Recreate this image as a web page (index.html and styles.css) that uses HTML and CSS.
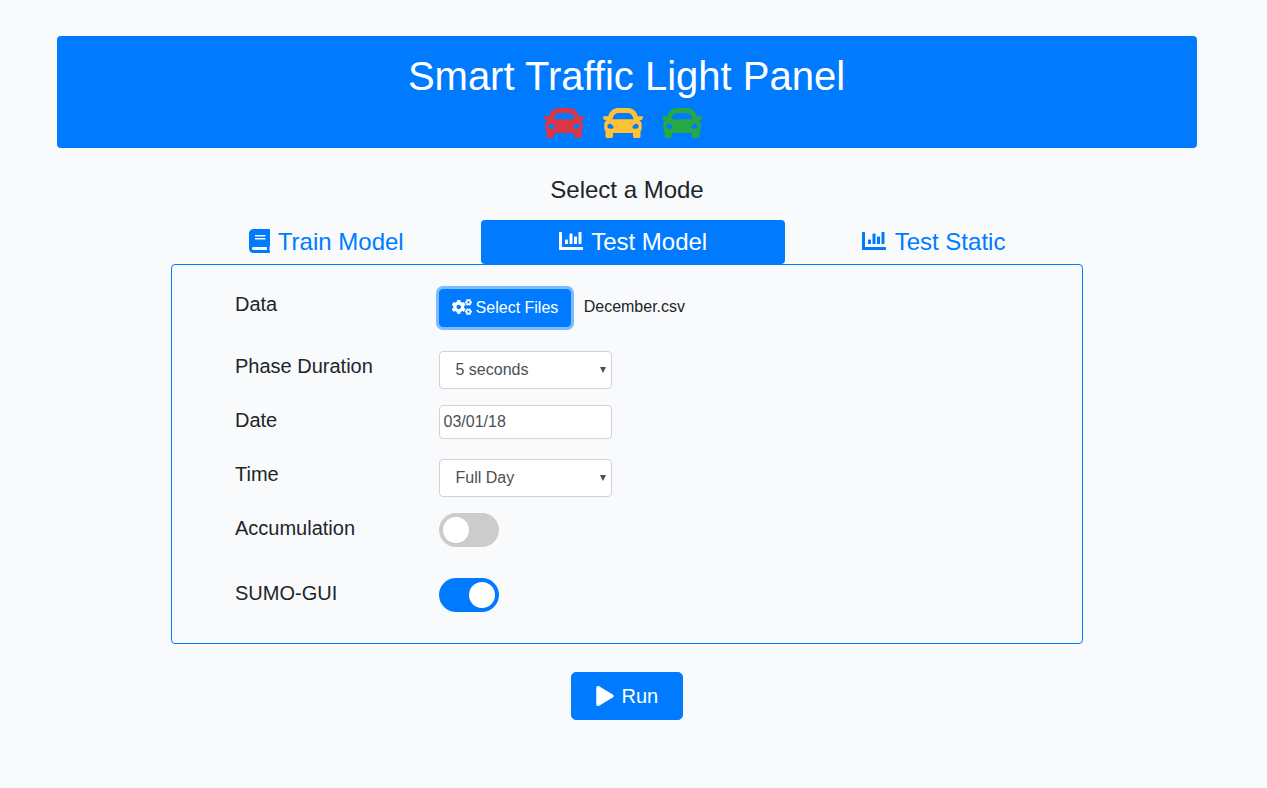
FILE: index.html
```
<!DOCTYPE html>
<html lang="en">
<head>
<meta charset="utf-8">
<title>Smart Traffic Light Panel</title>
<link rel="stylesheet" href="styles.css">
</head>
<body>
<svg class="defs" aria-hidden="true">
  <symbol id="car" viewBox="0 0 512 512"><path d="M499.991 168h-54.815l-7.854-20.944c-9.192-24.513-25.425-45.351-46.942-60.263S343.651 64 317.472 64H194.528c-26.18 0-51.391 7.882-72.908 22.793-21.518 14.912-37.75 35.75-46.942 60.263L66.824 168H12.009c-8.191 0-13.974 8.024-11.384 15.795l8 24A12 12 0 0 0 20.009 216h28.815l-.052.14C29.222 227.093 16 247.997 16 272v48c0 16.225 6.049 31.029 16 42.309V424c0 13.255 10.745 24 24 24h48c13.255 0 24-10.745 24-24v-40h256v40c0 13.255 10.745 24 24 24h48c13.255 0 24-10.745 24-24v-61.691c9.951-11.281 16-26.085 16-42.309v-48c0-24.003-13.222-44.907-32.772-55.86l-.052-.14h28.815a12 12 0 0 0 11.384-8.205l8-24c2.59-7.771-3.193-15.795-11.384-15.795zm-365.388 1.528C143.918 144.689 168 128 194.528 128h122.944c26.528 0 50.61 16.689 59.925 41.528L391.824 208H120.176l14.427-38.472zM88 328c-17.673 0-32-14.327-32-32s14.327-32 32-32 48 30.327 48 48-30.327 16-48 16zm336 0c-17.673 0-48 1.673-48-16s30.327-48 48-48 32 14.327 32 32-14.327 32-32 32z"/></symbol>
  <symbol id="book" viewBox="0 0 448 512"><path d="M448 360V24c0-13.3-10.7-24-24-24H96C43 0 0 43 0 96v320c0 53 43 96 96 96h328c13.3 0 24-10.7 24-24v-16c0-7.5-3.5-14.3-8.9-18.7-4.2-15.4-4.2-59.3 0-74.7 5.4-4.3 8.9-11.1 8.9-18.6zM128 134c0-3.3 2.7-6 6-6h212c3.3 0 6 2.7 6 6v20c0 3.3-2.7 6-6 6H134c-3.3 0-6-2.7-6-6v-20zm0 64c0-3.3 2.7-6 6-6h212c3.3 0 6 2.7 6 6v20c0 3.3-2.7 6-6 6H134c-3.3 0-6-2.7-6-6v-20zm253.4 250H96c-17.7 0-32-14.3-32-32 0-17.6 14.4-32 32-32h285.4c-1.9 17.1-1.9 46.9 0 64z"/></symbol>
  <symbol id="chart" viewBox="0 0 512 512"><path d="M500 384c6.600 0 12 5.400 12 12v40c0 6.600-5.400 12-12 12H12c-6.600 0-12-5.400-12-12V76c0-6.600 5.400-12 12-12h40c6.600 0 12 5.400 12 12v308h436z"/><rect x="128" y="224" width="64" height="96" rx="12"/><rect x="224" y="96" width="64" height="224" rx="12"/><rect x="320" y="160" width="64" height="160" rx="12"/><rect x="416" y="64" width="64" height="256" rx="12"/></symbol>
  <symbol id="play" viewBox="0 0 448 512"><path d="M424.4 214.7L72.4 6.6C43.800-10.300 0 6.100 0 47.900V464c0 37.500 40.700 60.100 72.400 41.300l352-208c31.400-18.500 31.500-64.100 0-82.600z"/></symbol>
  <symbol id="cogs" viewBox="0 0 640 512">
    <path id="small-cog" d="M512.1 191l-8.2 14.3c-3 5.3-9.4 7.5-15.1 5.4-11.8-4.4-22.6-10.7-32.1-18.6-4.6-3.8-5.8-10.5-2.8-15.7l8.2-14.3c-6.9-8-12.3-17.3-15.9-27.4h-16.5c-6 0-11.2-4.3-12.2-10.3-2-12-2.1-24.6 0-37.1 1-6 6.2-10.4 12.2-10.4h16.5c3.6-10.1 9-19.4 15.9-27.4l-8.2-14.3c-3-5.2-1.9-11.9 2.8-15.7 9.5-7.9 20.4-14.2 32.1-18.6 5.7-2.1 12.1.1 15.1 5.4l8.2 14.3c10.5-1.9 21.2-1.9 31.7 0L552 6.3c3-5.3 9.4-7.5 15.1-5.4 11.8 4.4 22.6 10.7 32.1 18.6 4.6 3.8 5.8 10.5 2.8 15.7l-8.2 14.3c6.9 8 12.3 17.3 15.9 27.4h16.5c6 0 11.2 4.3 12.2 10.3 2 12 2.1 24.6 0 37.1-1 6-6.2 10.4-12.2 10.4h-16.500c-3.6 10.1-9 19.4-15.900 27.4l8.2 14.3c3 5.2 1.9 11.9-2.8 15.7-9.5 7.900-20.4 14.2-32.1 18.600-5.7 2.1-12.1-.1-15.1-5.400l-8.2-14.3c-10.4 1.9-21.2 1.9-31.7 0zm-10.5-58.8c38.5 29.6 82.4-14.3 52.8-52.8-38.5-29.7-82.4 14.3-52.8 52.8z"/>
    <use href="#small-cog" y="301"/>
    <path d="M386.3 286.1l33.7 16.8c10.1 5.8 14.5 18.1 10.5 29.1-8.9 24.2-26.4 46.4-42.6 65.8-7.4 8.9-20.2 11.1-30.3 5.3l-29.1-16.8c-16 13.7-34.6 24.6-54.9 31.7v33.6c0 11.6-8.3 21.6-19.7 23.6-24.6 4.2-50.4 4.4-75.9 0-11.5-2-20-11.9-20-23.6V418c-20.3-7.2-38.9-18-54.9-31.7L74 403c-10 5.8-22.9 3.6-30.3-5.3-16.2-19.4-33.3-41.6-42.2-65.7-4-10.9.4-23.2 10.5-29.1l33.3-16.8c-3.9-20.9-3.9-42.4 0-63.4L12 205.8c-10.1-5.8-14.6-18.1-10.500-29 8.9-24.2 26-46.4 42.2-65.8 7.4-8.900 20.2-11.1 30.3-5.3l29.1 16.8c16-13.7 34.6-24.600 54.9-31.7V57.1c0-11.5 8.2-21.5 19.6-23.5 24.6-4.2 50.5-4.4 76-.1 11.5 2 20 11.9 20 23.6v33.6c20.3 7.2 38.9 18 54.9 31.7l29.1-16.8c10-5.8 22.9-3.6 30.3 5.3 16.2 19.4 33.2 41.6 42.1 65.8 4 10.9.1 23.2-10 29.1l-33.7 16.8c3.9 21 3.9 42.5 0 63.5zm-117.6 21.1c59.2-77-28.700-164.9-105.7-105.7-59.2 77 28.7 164.9 105.7 105.7z"/>
  </symbol>
</svg>
<main class="container">
  <header class="banner">
    <h1>Smart Traffic Light Panel</h1>
    <div class="cars">
      <svg class="red"><use href="#car"/></svg>
      <svg class="yellow"><use href="#car"/></svg>
      <svg class="green"><use href="#car"/></svg>
    </div>
  </header>
  <section class="mode">
    <h2>Select a Mode</h2>
    <nav class="tabs">
      <a class="tab"><svg class="book"><use href="#book"/></svg> Train Model</a>
      <a class="tab active"><svg class="chart"><use href="#chart"/></svg> Test Model</a>
      <a class="tab"><svg class="chart"><use href="#chart"/></svg> Test Static</a>
    </nav>
    <form class="panel">
      <div class="row data">
        <label>Data</label>
        <button type="button" class="btn files"><svg><use href="#cogs"/></svg> Select Files</button>
        <span class="filename">December.csv</span>
      </div>
      <div class="row"><label>Phase Duration</label><div class="field select"><span>5 seconds</span><i class="arrow"></i></div></div>
      <div class="row"><label>Date</label><div class="field date">03/01/18</div></div>
      <div class="row"><label>Time</label><div class="field select"><span>Full Day</span><i class="arrow"></i></div></div>
      <div class="row accumulation"><label>Accumulation</label><div class="switch"><i></i></div></div>
      <div class="row"><label>SUMO-GUI</label><div class="switch on"><i></i></div></div>
    </form>
  </section>
  <button type="button" class="btn run"><svg><use href="#play"/></svg> Run</button>
</main>
</body>
</html>
```
FILE: styles.css
```
* { box-sizing: border-box; }
body {
  margin: 0;
  background: #f8fafc;
  color: #212529;
  font: 16px/1.5 "Liberation Sans", Arial, sans-serif;
}
svg { fill: currentColor; }
.defs { display: none; }
.container {
  width: 1140px;
  margin-left: 57px;
  padding-top: 36px;
  display: flex;
  flex-direction: column;
  align-items: center;
}
.banner {
  width: 100%;
  height: 112px;
  padding-top: 16px;
  border-radius: 4px;
  background: #007bff;
  color: #fff;
  text-align: center;
}
h1 { margin: 0 1px 0 0; font-size: 40px; font-weight: 400; line-height: 48px; }
.cars { display: flex; justify-content: center; gap: 19px; padding: 3px 8px 0 0; }
.cars svg { width: 40px; height: 40px; }
.red { color: #dc3545; }
.yellow { color: #ffc135; }
.green { color: #28a745; }

.mode { width: 912px; padding-top: 27px; }
h2 { margin: 0 0 16px; font-size: 24px; font-weight: 400; line-height: 29px; text-align: center; }
.tabs { display: flex; }
.tab {
  flex: 1 1 auto;
  padding: 4px 16px;
  border-radius: 4px;
  color: #007bff;
  font-size: 24px;
  line-height: 36px;
  text-align: center;
}
.tab.active { background: #007bff; color: #fff; }
.tab svg { height: 24px; margin-right: 2px; vertical-align: -3px; }
.book { width: 21px; }
.chart { width: 24px; }

.panel { height: 380px; padding: 24px 63px; border: 1px solid #007bff; border-radius: 4px; }
.row { display: flex; align-items: flex-start; height: 54px; }
.row.data { height: 62px; }
.row.accumulation { height: 65px; }
label { width: 204px; font-size: 20px; line-height: 30px; }
.btn {
  border: 1px solid #007bff;
  background: #007bff;
  color: #fff;
  font-family: inherit;
  white-space: nowrap;
}
.files {
  width: 132px;
  height: 38px;
  padding: 0;
  border-radius: 4px;
  box-shadow: 0 0 0 3px rgba(0, 123, 255, .5);
  font-size: 16px;
}
.files svg { width: 20px; height: 16px; margin-right: -0.5px; vertical-align: -2px; }
.filename { margin-left: 12.7px; line-height: 36px; }
.field {
  display: flex;
  align-items: center;
  justify-content: space-between;
  width: 173px;
  height: 38px;
  border: 1px solid #ced4da;
  border-radius: 4px;
  background: #fff;
  color: #495057;
}
.select { padding: 0 5px 0 15.5px; }
.date { height: 34px; padding-left: 3.5px; }
.arrow { border: solid transparent; border-width: 6px 3px 0; border-top-color: #495057; }
.switch { width: 60px; height: 34px; padding: 4px; border-radius: 17px; background: #ccc; }
.switch i { display: block; width: 26px; height: 26px; border-radius: 50%; background: #fff; }
.switch.on { background: #007bff; }
.switch.on i { margin-left: 26px; }
.run {
  align-self: flex-start;
  width: 112px;
  height: 48px;
  margin: 28px 0 0 514px;
  padding: 0;
  border-radius: 5px;
  font-size: 20px;
}
.run svg { width: 18px; height: 20px; margin-right: 2px; vertical-align: -3px; }
```
